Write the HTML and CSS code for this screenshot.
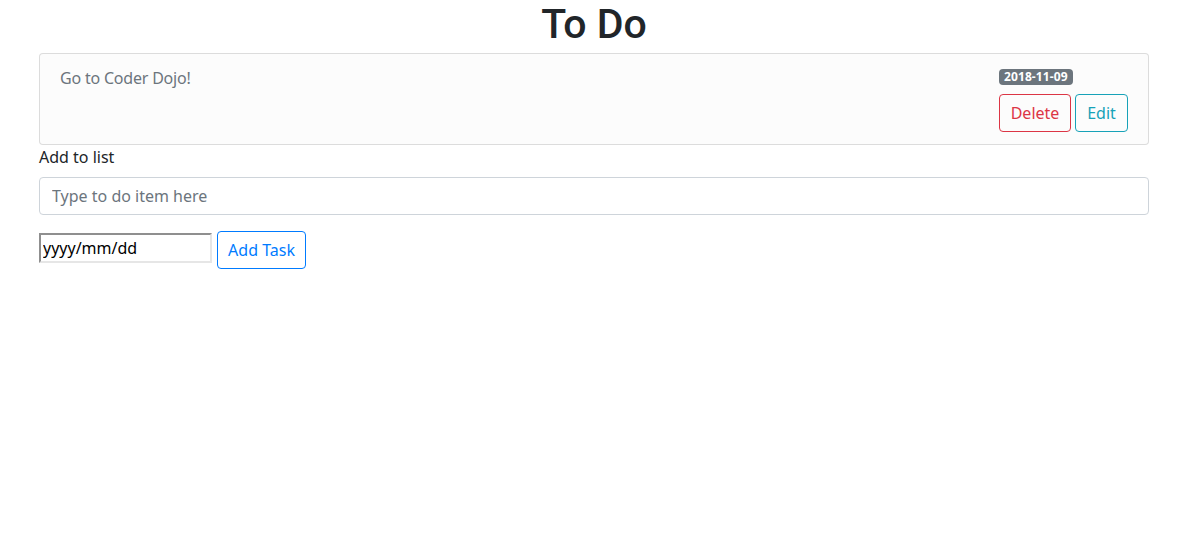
FILE: index.html
```html
<!DOCTYPE html>
<html>
<head>
<meta charset="utf-8">
<link rel="stylesheet" href="styles.css">
</head>
<body>
<div class="container">
  <h1 class="title">To Do</h1>
  <div class="card">
    <div class="item-text">Go to Coder Dojo!</div>
    <div class="item-side">
      <span class="badge">2018-11-09</span>
      <div class="actions">
        <button class="btn btn-danger">Delete</button>
        <button class="btn btn-info">Edit</button>
      </div>
    </div>
  </div>
  <label class="label" for="todo">Add to list</label>
  <input id="todo" class="form-control" type="text" placeholder="Type to do item here">
  <div class="add-row">
    <input class="date-input" type="text" placeholder="yyyy/mm/dd">
    <button class="btn btn-primary">Add Task</button>
  </div>
</div>
</body>
</html>
```

FILE: styles.css
```css
* { box-sizing: border-box; }
body {
  margin: 0;
  font-family: "Noto Sans", "Open Sans", sans-serif;
  font-size: 16px;
  line-height: 1.5;
  color: #212529;
  background: #fff;
}
.container {
  width: 1110px;
  margin: 0 0 0 39px;
}
.title {
  margin: 0 0 5px;
  text-align: center;
  font-family: Roboto, "Noto Sans", sans-serif;
  font-size: 41px;
  font-weight: 500;
  line-height: 48px;
  color: #212529;
}
.card {
  display: flex;
  justify-content: space-between;
  background: #fcfcfc;
  border: 1px solid rgba(0,0,0,.125);
  border-radius: 4px;
  padding: 12px 20px 12px 20px;
  height: 92px;
}
.item-text {
  color: #6c757d;
  letter-spacing: -0.2px;
}
.item-side {
  width: 129px;
  display: flex;
  flex-direction: column;
  align-items: flex-start;
  padding-top: 3px;
}
.badge {
  display: inline-block;
  background: #6c757d;
  color: #fff;
  font-size: 12px;
  font-weight: 700;
  line-height: 1;
  padding: 2px 5px 2px;
  border-radius: 4px;
  letter-spacing: 0.1px;
}
.actions {
  display: flex;
  gap: 4px;
  margin-top: 9px;
}
.btn {
  font-family: inherit;
  font-size: 16px;
  line-height: 24px;
  padding: 6px 0;
  background: transparent;
  border: 1px solid;
  border-radius: 4px;
  text-align: center;
  cursor: pointer;
}
.btn-danger { color: #dc3545; border-color: #dc3545; width: 72px; }
.btn-info { color: #17a2b8; border-color: #17a2b8; width: 53px; }
.btn-primary { color: #007bff; border-color: #007bff; width: 89px; }
.label {
  display: block;
  margin-top: 0;
  margin-bottom: 8px;
}
.form-control {
  display: block;
  width: 100%;
  height: 38px;
  padding: 6px 12px;
  font-family: inherit;
  font-size: 16px;
  line-height: 24px;
  color: #495057;
  border: 1px solid #ced4da;
  border-radius: 4px;
}
.form-control::placeholder { color: #6c757d; }
.add-row {
  display: flex;
  align-items: flex-start;
  gap: 5px;
  margin-top: 16px;
}
.date-input {
  width: 173px;
  height: 30px;
  padding: 1px 2px;
  font-family: inherit;
  font-size: 16px;
  border-style: solid;
  border-width: 2px;
  border-top-color: #8f8f8f;
  border-left-color: #8f8f8f;
  border-right-color: #e6e6e6;
  border-bottom-color: #e6e6e6;
  margin-top: 2px;
}
.date-input::placeholder { color: #000; }
```
